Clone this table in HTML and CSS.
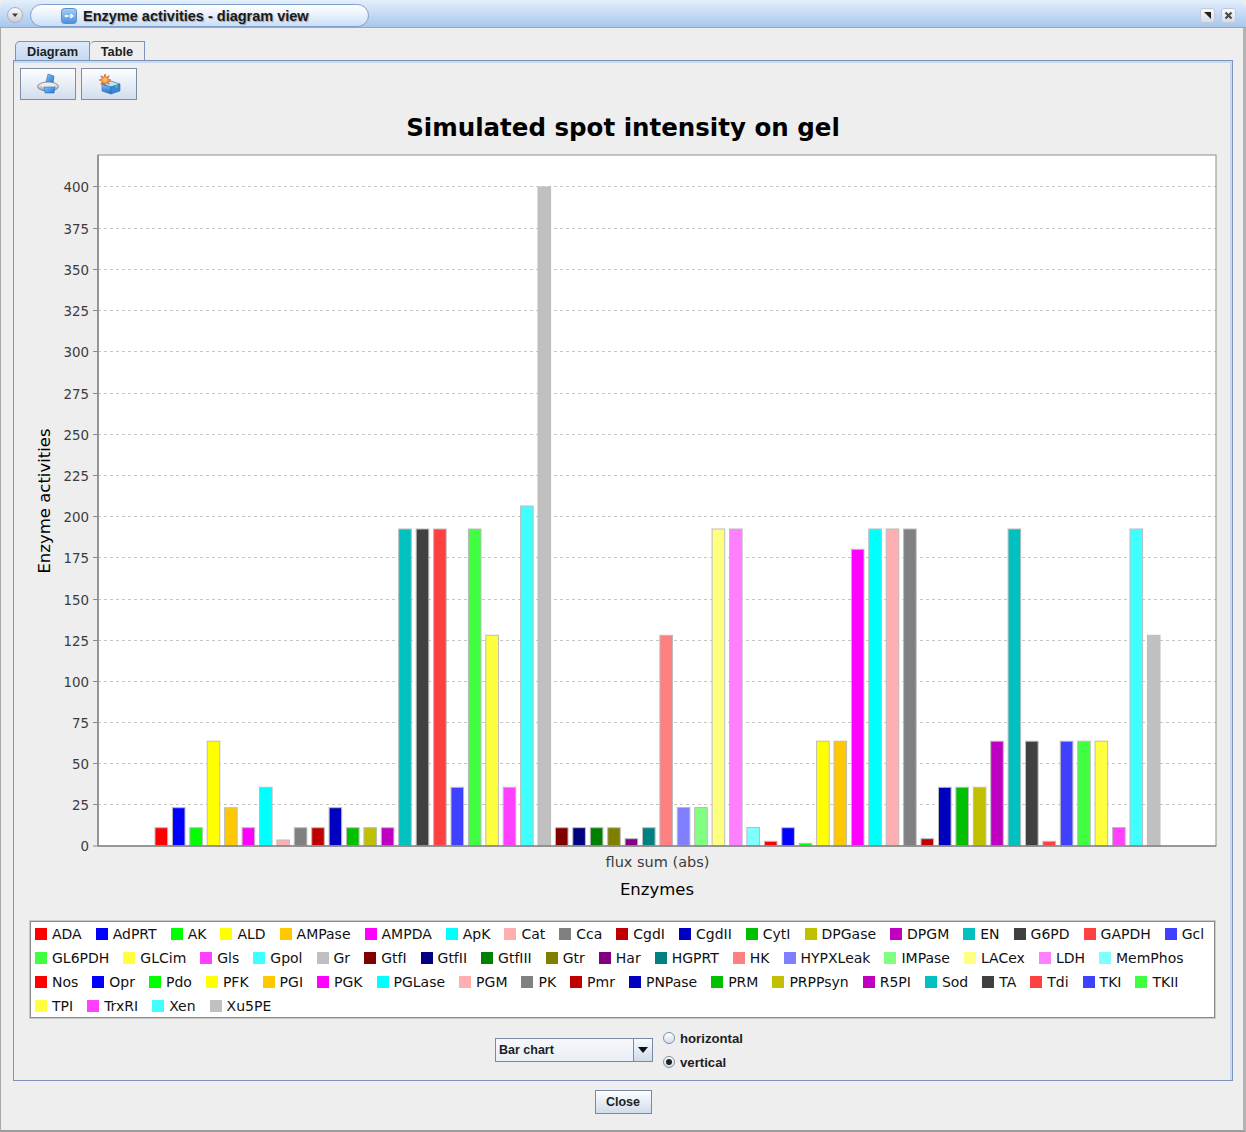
FILE: index.html
```html
<!DOCTYPE html>
<html>
<head>
<meta charset="utf-8">
<title>Enzyme activities - diagram view</title>
<link rel="stylesheet" href="styles.css">
</head>
<body>
<div class="window">
  <div class="titlebar">
    <div class="sysmenu">
      <svg width="16" height="16" viewBox="0 0 16 16"><defs><linearGradient id="gSys" x1="0" y1="0" x2="0" y2="1"><stop offset="0" stop-color="#fbfbfb"/><stop offset="1" stop-color="#c9cdd3"/></linearGradient></defs><circle cx="8" cy="8" r="7.5" fill="url(#gSys)" stroke="#a9b0ba"/><path d="M5 6.5h6l-3 3.5z" fill="#3a3a3a"/></svg>
    </div>
    <div class="pill">
      <svg class="appicon" width="16" height="16" viewBox="0 0 16 16"><defs><linearGradient id="gApp" x1="0" y1="0" x2="0" y2="1"><stop offset="0" stop-color="#a8d0f7"/><stop offset="1" stop-color="#4b8fdc"/></linearGradient></defs><rect x="0.5" y="0.5" width="15" height="15" rx="3" fill="url(#gApp)" stroke="#5d8cc8"/><path d="M4 8h8M9.5 6l2.5 2-2.5 2" fill="none" stroke="#ffffff" stroke-width="1.2"/><circle cx="5" cy="8" r="1.3" fill="#ffffff"/></svg>
      <span class="wtitle">Enzyme activities - diagram view</span>
    </div>
    <div class="spacer"></div>
    <div class="tbtn"><svg width="13" height="13" viewBox="0 0 13 13"><path d="M3 3h7v7z" fill="#222"/></svg></div>
    <div class="tbtn"><svg width="13" height="13" viewBox="0 0 13 13"><path d="M3.5 3.5l6 6M9.5 3.5l-6 6" stroke="#4a4a4a" stroke-width="2.2"/></svg></div>
  </div>

  <div class="client">
    <div class="tabs">
      <div class="tab active">Diagram</div>
      <div class="tab plain">Table</div>
    </div>
    <div class="tabpanel">
      <div class="toolbar">
        <div class="tool">
          <svg width="26" height="24" viewBox="0 0 26 24">
            <defs>
              <linearGradient id="gPaper" x1="0" y1="0" x2="1" y2="1"><stop offset="0" stop-color="#8cc4f6"/><stop offset="1" stop-color="#1f74d6"/></linearGradient>
              <linearGradient id="gBody" x1="0" y1="0" x2="0" y2="1"><stop offset="0" stop-color="#ffffff"/><stop offset="1" stop-color="#9aa0a8"/></linearGradient>
            </defs>
            <path d="M11 10 L13 2 L19 4 L18 12 Z" fill="url(#gPaper)" stroke="#2c6fbf" stroke-width="0.6"/>
            <ellipse cx="13" cy="14.5" rx="10.5" ry="4.5" fill="url(#gBody)" stroke="#6d737b" stroke-width="0.8"/>
            <ellipse cx="13" cy="13.5" rx="7" ry="2" fill="#e9ecef"/>
            <path d="M9 15 L20 15 L19 21 L10 21 Z" fill="url(#gPaper)" stroke="#2c6fbf" stroke-width="0.6"/>
          </svg>
        </div>
        <div class="tool">
          <svg width="26" height="24" viewBox="0 0 26 24">
            <defs>
              <linearGradient id="gBox" x1="0" y1="0" x2="0" y2="1"><stop offset="0" stop-color="#7fc3f4"/><stop offset="1" stop-color="#1f6ec8"/></linearGradient>
              <radialGradient id="gStar" cx="0.5" cy="0.5" r="0.5"><stop offset="0" stop-color="#ffd27a"/><stop offset="1" stop-color="#f06a1d"/></radialGradient>
            </defs>
            <path d="M6 12 L15 9 L24 12 L15 15 Z" fill="#bfe2fb" stroke="#2e6bb3" stroke-width="0.6"/>
            <path d="M6 12 L15 15 L15 22 L6 19 Z" fill="url(#gBox)" stroke="#2e6bb3" stroke-width="0.6"/>
            <path d="M15 15 L24 12 L24 19 L15 22 Z" fill="#3b86d8" stroke="#2e6bb3" stroke-width="0.6"/>
            <circle cx="20.5" cy="14.5" r="1.4" fill="#36d436"/>
            <polygon points="9,2 10.07,5.41 13.24,3.76 11.59,6.93 15,8 11.59,9.07 13.24,12.24 10.07,10.59 9,14 7.93,10.59 4.76,12.24 6.41,9.07 3,8 6.41,6.93 4.76,3.76 7.93,5.41" fill="url(#gStar)" stroke="#d2560f" stroke-width="0.6"/>
          </svg>
        </div>
      </div>

      <div class="chart-title">Simulated spot intensity on gel</div>

      <svg class="chart" width="1218" height="770" viewBox="14 141 1218 770">
        <rect x="98" y="155" width="1118" height="691" fill="#ffffff"/>
        <g class="grid">
          <line x1="98" x2="1216" y1="804.5" y2="804.5"/>
          <line x1="98" x2="1216" y1="763.5" y2="763.5"/>
          <line x1="98" x2="1216" y1="722.5" y2="722.5"/>
          <line x1="98" x2="1216" y1="681.5" y2="681.5"/>
          <line x1="98" x2="1216" y1="640.5" y2="640.5"/>
          <line x1="98" x2="1216" y1="599.5" y2="599.5"/>
          <line x1="98" x2="1216" y1="557.5" y2="557.5"/>
          <line x1="98" x2="1216" y1="516.5" y2="516.5"/>
          <line x1="98" x2="1216" y1="475.5" y2="475.5"/>
          <line x1="98" x2="1216" y1="434.5" y2="434.5"/>
          <line x1="98" x2="1216" y1="393.5" y2="393.5"/>
          <line x1="98" x2="1216" y1="351.5" y2="351.5"/>
          <line x1="98" x2="1216" y1="310.5" y2="310.5"/>
          <line x1="98" x2="1216" y1="269.5" y2="269.5"/>
          <line x1="98" x2="1216" y1="228.5" y2="228.5"/>
          <line x1="98" x2="1216" y1="186.5" y2="186.5"/>
        </g>
        <g class="bars">
          <rect class="s1" x="155.0" y="827.7" width="12.6" height="18.3"/>
          <rect class="s2" x="172.4" y="807.7" width="12.6" height="38.3"/>
          <rect class="s3" x="189.8" y="827.7" width="12.6" height="18.3"/>
          <rect class="s4" x="207.2" y="741.2" width="12.6" height="104.8"/>
          <rect class="s5" x="224.6" y="807.7" width="12.6" height="38.3"/>
          <rect class="s6" x="242.1" y="827.7" width="12.6" height="18.3"/>
          <rect class="s7" x="259.5" y="787.3" width="12.6" height="58.7"/>
          <rect class="s8" x="276.9" y="840.0" width="12.6" height="6.0"/>
          <rect class="s9" x="294.3" y="827.7" width="12.6" height="18.3"/>
          <rect class="s10" x="311.7" y="827.7" width="12.6" height="18.3"/>
          <rect class="s11" x="329.1" y="807.7" width="12.6" height="38.3"/>
          <rect class="s12" x="346.5" y="827.7" width="12.6" height="18.3"/>
          <rect class="s13" x="363.9" y="827.7" width="12.6" height="18.3"/>
          <rect class="s14" x="381.3" y="827.7" width="12.6" height="18.3"/>
          <rect class="s15" x="398.7" y="529" width="12.6" height="317"/>
          <rect class="s16" x="416.2" y="529" width="12.6" height="317"/>
          <rect class="s17" x="433.6" y="529" width="12.6" height="317"/>
          <rect class="s18" x="451.0" y="787.3" width="12.6" height="58.7"/>
          <rect class="s19" x="468.4" y="529" width="12.6" height="317"/>
          <rect class="s20" x="485.8" y="635.3" width="12.6" height="210.7"/>
          <rect class="s21" x="503.2" y="787.3" width="12.6" height="58.7"/>
          <rect class="s22" x="520.6" y="506" width="12.6" height="340"/>
          <rect class="s23" x="538.0" y="187" width="12.6" height="659"/>
          <rect class="s24" x="555.4" y="827.7" width="12.6" height="18.3"/>
          <rect class="s25" x="572.8" y="827.7" width="12.6" height="18.3"/>
          <rect class="s26" x="590.3" y="827.7" width="12.6" height="18.3"/>
          <rect class="s27" x="607.7" y="827.7" width="12.6" height="18.3"/>
          <rect class="s28" x="625.1" y="838.7" width="12.6" height="7.3"/>
          <rect class="s29" x="642.5" y="827.7" width="12.6" height="18.3"/>
          <rect class="s30" x="659.9" y="635.3" width="12.6" height="210.7"/>
          <rect class="s31" x="677.3" y="807.5" width="12.6" height="38.5"/>
          <rect class="s32" x="694.7" y="807.5" width="12.6" height="38.5"/>
          <rect class="s33" x="712.1" y="529" width="12.6" height="317"/>
          <rect class="s34" x="729.5" y="529" width="12.6" height="317"/>
          <rect class="s35" x="746.9" y="827.5" width="12.6" height="18.5"/>
          <rect class="s1" x="764.4" y="841.3" width="12.6" height="4.7"/>
          <rect class="s2" x="781.8" y="827.7" width="12.6" height="18.3"/>
          <rect class="s3" x="799.2" y="843.3" width="12.6" height="2.7"/>
          <rect class="s4" x="816.6" y="741.2" width="12.6" height="104.8"/>
          <rect class="s5" x="834.0" y="741.2" width="12.6" height="104.8"/>
          <rect class="s6" x="851.4" y="549.3" width="12.6" height="296.7"/>
          <rect class="s7" x="868.8" y="529" width="12.6" height="317"/>
          <rect class="s8" x="886.2" y="529" width="12.6" height="317"/>
          <rect class="s9" x="903.6" y="529" width="12.6" height="317"/>
          <rect class="s10" x="921.0" y="838.7" width="12.6" height="7.3"/>
          <rect class="s11" x="938.5" y="787.3" width="12.6" height="58.7"/>
          <rect class="s12" x="955.9" y="787.3" width="12.6" height="58.7"/>
          <rect class="s13" x="973.3" y="787.3" width="12.6" height="58.7"/>
          <rect class="s14" x="990.7" y="741.2" width="12.6" height="104.8"/>
          <rect class="s15" x="1008.1" y="529" width="12.6" height="317"/>
          <rect class="s16" x="1025.5" y="741.2" width="12.6" height="104.8"/>
          <rect class="s17" x="1042.9" y="841.3" width="12.6" height="4.7"/>
          <rect class="s18" x="1060.3" y="741.2" width="12.6" height="104.8"/>
          <rect class="s19" x="1077.7" y="741.2" width="12.6" height="104.8"/>
          <rect class="s20" x="1095.1" y="741.2" width="12.6" height="104.8"/>
          <rect class="s21" x="1112.6" y="827.5" width="12.6" height="18.5"/>
          <rect class="s22" x="1130.0" y="529" width="12.6" height="317"/>
          <rect class="s23" x="1147.4" y="635.3" width="12.6" height="210.7"/>
        </g>
        <rect class="frame" x="98" y="155" width="1118" height="691"/>
        <line class="axis" x1="98" x2="1216" y1="846" y2="846"/>
        <line class="axis" x1="98" x2="98" y1="155" y2="846"/>
        <g class="ticks">
          <line x1="93" x2="98" y1="846" y2="846"/>
          <line x1="93" x2="98" y1="804.5" y2="804.5"/>
          <line x1="93" x2="98" y1="763.5" y2="763.5"/>
          <line x1="93" x2="98" y1="722.5" y2="722.5"/>
          <line x1="93" x2="98" y1="681.5" y2="681.5"/>
          <line x1="93" x2="98" y1="640.5" y2="640.5"/>
          <line x1="93" x2="98" y1="599.5" y2="599.5"/>
          <line x1="93" x2="98" y1="557.5" y2="557.5"/>
          <line x1="93" x2="98" y1="516.5" y2="516.5"/>
          <line x1="93" x2="98" y1="475.5" y2="475.5"/>
          <line x1="93" x2="98" y1="434.5" y2="434.5"/>
          <line x1="93" x2="98" y1="393.5" y2="393.5"/>
          <line x1="93" x2="98" y1="351.5" y2="351.5"/>
          <line x1="93" x2="98" y1="310.5" y2="310.5"/>
          <line x1="93" x2="98" y1="269.5" y2="269.5"/>
          <line x1="93" x2="98" y1="228.5" y2="228.5"/>
          <line x1="93" x2="98" y1="186.5" y2="186.5"/>
        </g>
        <g class="ticklabels">
          <text x="89" y="851">0</text>
          <text x="89" y="809.5">25</text>
          <text x="89" y="768.5">50</text>
          <text x="89" y="727.5">75</text>
          <text x="89" y="686.5">100</text>
          <text x="89" y="645.5">125</text>
          <text x="89" y="604.5">150</text>
          <text x="89" y="562.5">175</text>
          <text x="89" y="521.5">200</text>
          <text x="89" y="480.5">225</text>
          <text x="89" y="439.5">250</text>
          <text x="89" y="398.5">275</text>
          <text x="89" y="356.5">300</text>
          <text x="89" y="315.5">325</text>
          <text x="89" y="274.5">350</text>
          <text x="89" y="233.5">375</text>
          <text x="89" y="191.5">400</text>
        </g>
        <text class="axislabel" transform="translate(50,501) rotate(-90)">Enzyme activities</text>
        <text class="catlabel" x="657.5" y="866.5">flux sum (abs)</text>
        <text class="axislabel" x="657" y="895">Enzymes</text>
      </svg>

      <div class="legend">
        <div class="lrow">
          <span class="li"><i class="sw s1"></i>ADA</span>
          <span class="li"><i class="sw s2"></i>AdPRT</span>
          <span class="li"><i class="sw s3"></i>AK</span>
          <span class="li"><i class="sw s4"></i>ALD</span>
          <span class="li"><i class="sw s5"></i>AMPase</span>
          <span class="li"><i class="sw s6"></i>AMPDA</span>
          <span class="li"><i class="sw s7"></i>ApK</span>
          <span class="li"><i class="sw s8"></i>Cat</span>
          <span class="li"><i class="sw s9"></i>Cca</span>
          <span class="li"><i class="sw s10"></i>CgdI</span>
          <span class="li"><i class="sw s11"></i>CgdII</span>
          <span class="li"><i class="sw s12"></i>CytI</span>
          <span class="li"><i class="sw s13"></i>DPGase</span>
          <span class="li"><i class="sw s14"></i>DPGM</span>
          <span class="li"><i class="sw s15"></i>EN</span>
          <span class="li"><i class="sw s16"></i>G6PD</span>
          <span class="li"><i class="sw s17"></i>GAPDH</span>
          <span class="li"><i class="sw s18"></i>Gcl</span>
        </div>
        <div class="lrow">
          <span class="li"><i class="sw s19"></i>GL6PDH</span>
          <span class="li"><i class="sw s20"></i>GLCim</span>
          <span class="li"><i class="sw s21"></i>Gls</span>
          <span class="li"><i class="sw s22"></i>Gpol</span>
          <span class="li"><i class="sw s23"></i>Gr</span>
          <span class="li"><i class="sw s24"></i>GtfI</span>
          <span class="li"><i class="sw s25"></i>GtfII</span>
          <span class="li"><i class="sw s26"></i>GtfIII</span>
          <span class="li"><i class="sw s27"></i>Gtr</span>
          <span class="li"><i class="sw s28"></i>Har</span>
          <span class="li"><i class="sw s29"></i>HGPRT</span>
          <span class="li"><i class="sw s30"></i>HK</span>
          <span class="li"><i class="sw s31"></i>HYPXLeak</span>
          <span class="li"><i class="sw s32"></i>IMPase</span>
          <span class="li"><i class="sw s33"></i>LACex</span>
          <span class="li"><i class="sw s34"></i>LDH</span>
          <span class="li"><i class="sw s35"></i>MemPhos</span>
        </div>
        <div class="lrow">
          <span class="li"><i class="sw s1"></i>Nos</span>
          <span class="li"><i class="sw s2"></i>Opr</span>
          <span class="li"><i class="sw s3"></i>Pdo</span>
          <span class="li"><i class="sw s4"></i>PFK</span>
          <span class="li"><i class="sw s5"></i>PGI</span>
          <span class="li"><i class="sw s6"></i>PGK</span>
          <span class="li"><i class="sw s7"></i>PGLase</span>
          <span class="li"><i class="sw s8"></i>PGM</span>
          <span class="li"><i class="sw s9"></i>PK</span>
          <span class="li"><i class="sw s10"></i>Pmr</span>
          <span class="li"><i class="sw s11"></i>PNPase</span>
          <span class="li"><i class="sw s12"></i>PRM</span>
          <span class="li"><i class="sw s13"></i>PRPPsyn</span>
          <span class="li"><i class="sw s14"></i>R5PI</span>
          <span class="li"><i class="sw s15"></i>Sod</span>
          <span class="li"><i class="sw s16"></i>TA</span>
          <span class="li"><i class="sw s17"></i>Tdi</span>
          <span class="li"><i class="sw s18"></i>TKI</span>
          <span class="li"><i class="sw s19"></i>TKII</span>
        </div>
        <div class="lrow">
          <span class="li"><i class="sw s20"></i>TPI</span>
          <span class="li"><i class="sw s21"></i>TrxRI</span>
          <span class="li"><i class="sw s22"></i>Xen</span>
          <span class="li"><i class="sw s23"></i>Xu5PE</span>
        </div>
      </div>

      <div class="controls">
        <div class="combo">
          <div class="combo-field">Bar chart</div>
          <div class="combo-btn"><svg width="10" height="6" viewBox="0 0 10 6"><path d="M0 0h10L5 6z" fill="#111"/></svg></div>
        </div>
        <div class="radios">
          <div class="radio">
            <svg width="12" height="12" viewBox="0 0 12 12"><defs><linearGradient id="gRad1" x1="0" y1="0" x2="0" y2="1"><stop offset="0" stop-color="#ffffff"/><stop offset="1" stop-color="#d3dde9"/></linearGradient></defs><circle cx="6" cy="6" r="5.5" fill="url(#gRad1)" stroke="#7f8ea5"/></svg>
            <span>horizontal</span>
          </div>
          <div class="radio">
            <svg width="12" height="12" viewBox="0 0 12 12"><defs><linearGradient id="gRad2" x1="0" y1="0" x2="0" y2="1"><stop offset="0" stop-color="#ffffff"/><stop offset="1" stop-color="#d3dde9"/></linearGradient></defs><circle cx="6" cy="6" r="5.5" fill="url(#gRad2)" stroke="#7f8ea5"/><circle cx="6" cy="6" r="3" fill="#222"/></svg>
            <span>vertical</span>
          </div>
        </div>
      </div>
    </div>

    <div class="footer">
      <div class="close-btn">Close</div>
    </div>
  </div>
</div>
</body>
</html>
```

FILE: styles.css
```css
* { box-sizing: border-box; }
html, body { margin: 0; padding: 0; }
body {
  width: 1246px;
  height: 1132px;
  overflow: hidden;
  background: #eeeeee;
  font-family: "Liberation Sans", Arial, sans-serif;
  color: #1e1e1e;
}
.window {
  width: 1246px;
  height: 1132px;
  display: flex;
  flex-direction: column;
}

/* ---------- title bar ---------- */
.titlebar {
  height: 28px;
  flex: none;
  display: flex;
  align-items: flex-start;
  padding: 0 10px 0 7px;
  border-radius: 8px 8px 0 0;
  background: linear-gradient(#e4effb, #c3d9f4 55%, #a9c7ec);
  border-bottom: 1px solid #8eaad0;
}
.sysmenu { width: 16px; height: 16px; margin-top: 7px; }
.sysmenu svg { display: block; }
.pill {
  width: 339px;
  height: 23px;
  margin: 4px 0 0 7px;
  padding-left: 30px;
  display: flex;
  align-items: center;
  border: 1px solid #7f9fcf;
  border-radius: 12px;
  background: linear-gradient(#ffffff, #eaf2fc 45%, #cadef6);
}
.appicon { display: block; flex: none; }
.wtitle {
  margin-left: 6px;
  font: bold 14.5px "Liberation Sans", Arial, sans-serif;
  color: #1a1a1a;
  text-shadow: 1px 1px 1px rgba(0, 0, 0, 0.3);
  white-space: nowrap;
}
.spacer { flex: 1; }
.tbtn {
  width: 15px;
  height: 15px;
  margin: 8px 0 0 6px;
  border: 1px solid #c1cbd8;
  border-radius: 3px;
  background: linear-gradient(#fafbfd, #d6dee9);
  display: flex;
  align-items: center;
  justify-content: center;
}
.tbtn svg { display: block; }

/* ---------- client area ---------- */
.client {
  flex: 1;
  display: flex;
  flex-direction: column;
  padding: 13px 10px 0 12px;
  border-left: 1px solid #a9a9a9;
  border-right: 3px solid #b4b4b4;
  border-bottom: 2px solid #9c9c9c;
}
.tabs {
  display: flex;
  height: 19px;
  padding-left: 2px;
  flex: none;
}
.tab {
  height: 19px;
  display: flex;
  align-items: center;
  justify-content: center;
  border: 1px solid #7b93b8;
  border-bottom: none;
  border-radius: 5px 0 0 0;
  font: bold 12.8px "Liberation Sans", Arial, sans-serif;
  color: #1e1e1e;
}
.tab.active {
  width: 75px;
  background: linear-gradient(#dce9f8, #c5d9f0);
}
.tab.plain {
  width: 55px;
  border-left: none;
  background: #eeeeee;
}
.tabpanel {
  height: 1021px;
  flex: none;
  display: flex;
  flex-direction: column;
  border: 1px solid #7b94ba;
  box-shadow: inset 0 2px 0 #c8daf1, inset -2px 0 0 #c8daf1;
}

/* ---------- toolbar ---------- */
.toolbar {
  display: flex;
  gap: 5px;
  margin: 7px 0 0 6px;
}
.tool {
  width: 56px;
  height: 32px;
  border: 1px solid #7d8da6;
  background: linear-gradient(#fdfeff, #e8eef6 50%, #d2dded);
  display: flex;
  align-items: center;
  justify-content: center;
}
.tool svg { display: block; }

/* ---------- chart ---------- */
.chart-title {
  margin-top: 13px;
  height: 28px;
  line-height: 28px;
  text-align: center;
  font: bold 24.5px "DejaVu Sans", sans-serif;
  color: #000;
  white-space: nowrap;
}
.chart { display: block; flex: none; }
.grid line {
  stroke: #c6c6c6;
  stroke-width: 1;
  stroke-dasharray: 3 3;
}
.bars rect {
  stroke: #bcbcbc;
  stroke-width: 1;
}
.frame {
  fill: none;
  stroke: #8d8d8d;
  stroke-width: 1;
}
.axis {
  stroke: #8a8a8a;
  stroke-width: 1.6;
}
.ticks line {
  stroke: #8a8a8a;
  stroke-width: 1;
}
.ticklabels text {
  font: 13.4px "DejaVu Sans", sans-serif;
  fill: #3c3c3c;
  text-anchor: end;
}
.axislabel {
  font: 16.5px "DejaVu Sans", sans-serif;
  fill: #000;
  text-anchor: middle;
}
.catlabel {
  font: 14.5px "DejaVu Sans", sans-serif;
  fill: #3c3c3c;
  text-anchor: middle;
}

/* ---------- legend ---------- */
.legend {
  margin: 10px 0 0 16px;
  width: 1185px;
  height: 97px;
  flex: none;
  background: #ffffff;
  border: 1px solid #8a8a8a;
  box-shadow: 0 0 0 1px #c9c9c9;
  padding-left: 4px;
  font: 14px "DejaVu Sans", sans-serif;
  color: #111;
}
.lrow {
  display: flex;
  height: 24px;
  align-items: center;
}
.li {
  display: flex;
  align-items: center;
  margin-right: 14px;
  white-space: nowrap;
}
.sw {
  display: block;
  width: 12px;
  height: 12px;
  margin-right: 5px;
}

/* ---------- series colours ---------- */
.s1 { background: #ff0000; fill: #ff0000; }
.s2 { background: #0000ff; fill: #0000ff; }
.s3 { background: #00ff00; fill: #00ff00; }
.s4 { background: #ffff00; fill: #ffff00; }
.s5 { background: #ffc800; fill: #ffc800; }
.s6 { background: #ff00ff; fill: #ff00ff; }
.s7 { background: #00ffff; fill: #00ffff; }
.s8 { background: #ffafaf; fill: #ffafaf; }
.s9 { background: #808080; fill: #808080; }
.s10 { background: #c00000; fill: #c00000; }
.s11 { background: #0000c0; fill: #0000c0; }
.s12 { background: #00c000; fill: #00c000; }
.s13 { background: #c0c000; fill: #c0c000; }
.s14 { background: #c000c0; fill: #c000c0; }
.s15 { background: #00c0c0; fill: #00c0c0; }
.s16 { background: #404040; fill: #404040; }
.s17 { background: #ff4040; fill: #ff4040; }
.s18 { background: #4040ff; fill: #4040ff; }
.s19 { background: #40ff40; fill: #40ff40; }
.s20 { background: #ffff40; fill: #ffff40; }
.s21 { background: #ff40ff; fill: #ff40ff; }
.s22 { background: #40ffff; fill: #40ffff; }
.s23 { background: #c0c0c0; fill: #c0c0c0; }
.s24 { background: #800000; fill: #800000; }
.s25 { background: #000080; fill: #000080; }
.s26 { background: #008000; fill: #008000; }
.s27 { background: #808000; fill: #808000; }
.s28 { background: #800080; fill: #800080; }
.s29 { background: #008080; fill: #008080; }
.s30 { background: #ff8080; fill: #ff8080; }
.s31 { background: #8080ff; fill: #8080ff; }
.s32 { background: #80ff80; fill: #80ff80; }
.s33 { background: #ffff80; fill: #ffff80; }
.s34 { background: #ff80ff; fill: #ff80ff; }
.s35 { background: #80ffff; fill: #80ffff; }

/* ---------- controls ---------- */
.controls {
  flex: 1;
  display: flex;
  align-items: center;
  padding: 2px 0 0 481px;
}
.combo {
  width: 158px;
  height: 24px;
  display: flex;
  border: 1px solid #7a8aa4;
}
.combo-field {
  flex: 1;
  display: flex;
  align-items: center;
  padding-left: 3px;
  background: linear-gradient(#f6f8fc, #e9eff7);
  border-right: 1px solid #7a8aa4;
  font: bold 12.5px "Liberation Sans", Arial, sans-serif;
  color: #1e1e1e;
}
.combo-btn {
  width: 18px;
  display: flex;
  align-items: center;
  justify-content: center;
  background: linear-gradient(#f7fafd, #cfdcec);
}
.combo-btn svg { display: block; }
.radios {
  margin-left: 10px;
  display: flex;
  flex-direction: column;
}
.radio {
  height: 24px;
  display: flex;
  align-items: center;
  gap: 5px;
  font: bold 13.2px "Liberation Sans", Arial, sans-serif;
  color: #1e1e1e;
}
.radio svg { display: block; }

/* ---------- footer ---------- */
.footer {
  flex: 1;
  display: flex;
  justify-content: center;
  align-items: flex-start;
  padding-top: 9px;
}
.close-btn {
  width: 57px;
  height: 24px;
  display: flex;
  align-items: center;
  justify-content: center;
  border: 1px solid #7a8aa6;
  background: linear-gradient(#fdfeff, #e6edf6 50%, #d1dcea);
  font: bold 12.5px "Liberation Sans", Arial, sans-serif;
  color: #1e1e1e;
}
```
